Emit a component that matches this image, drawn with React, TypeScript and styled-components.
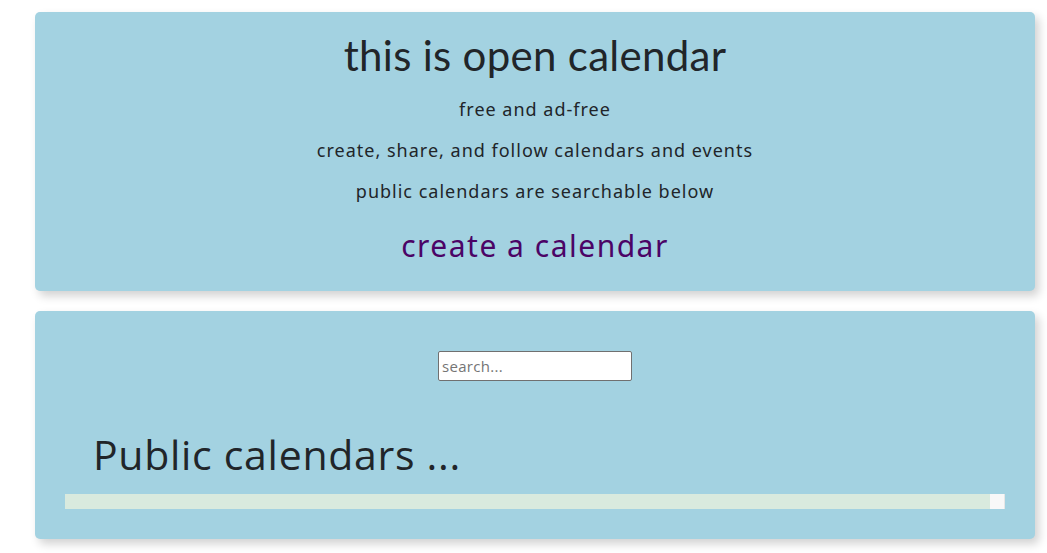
import React from "react";
import styled, { createGlobalStyle } from "styled-components";

const Global = createGlobalStyle`
  html, body { margin: 0; padding: 0; background: #ffffff; }
  body { font-family: "Lato", "Noto Sans", sans-serif; color: #212529; }
`;

const Page = styled.main`
  display: flex;
  flex-direction: column;
  gap: 20px;
  padding: 12px 12px 14px 35px;
  width: 1000px;
`;

const Card = styled.section`
  background: #a3d2e1;
  border-radius: 5px;
  box-shadow: 4px 5px 10px rgba(0, 0, 0, 0.18);
`;

const Intro = styled(Card)`
  height: 279px;
  box-sizing: border-box;
  padding-top: 20px;
  display: flex;
  flex-direction: column;
  align-items: center;
`;

const Title = styled.h1`
  margin: 0;
  font-family: "Lato", sans-serif;
  font-weight: 400;
  font-size: 42px;
  line-height: 46px;
  letter-spacing: 0.3px;
`;

const Line = styled.p`
  margin: 0;
  font-family: "Noto Sans", sans-serif;
  font-size: 18px;
  line-height: 41px;
  letter-spacing: 1px;
`;

const Lines = styled.div`
  display: flex;
  flex-direction: column;
  align-items: center;
  margin-top: 11px;
`;

const CreateLink = styled.a`
  margin-top: 14px;
  font-family: "Noto Sans", sans-serif;
  font-size: 30px;
  line-height: 40px;
  color: #4b0466;
  text-decoration: none;
  letter-spacing: 1.5px;
`;

const Browse = styled(Card)`
  height: 228px;
  box-sizing: border-box;
  padding: 40px 30px 0 30px;
  display: flex;
  flex-direction: column;
`;

const SearchRow = styled.div`
  display: flex;
  justify-content: center;
`;

const Search = styled.input`
  width: 194px;
  height: 30px;
  box-sizing: border-box;
  border: 1px solid #707070;
  border-radius: 2px;
  padding: 0 3px;
  font-family: "Open Sans", sans-serif;
  font-size: 15px;
  letter-spacing: 0.3px;
  color: #333;
  background: #fff;
  outline: none;
  &::placeholder { color: #757575; }
`;

const Heading = styled.h2`
  margin: 49px 0 0 28px;
  font-family: "Open Sans", sans-serif;
  font-weight: 400;
  font-size: 41px;
  line-height: 48px;
  letter-spacing: 0.7px;
`;

const Strip = styled.div`
  margin-top: 16px;
  height: 15px;
  display: flex;
`;

const Track = styled.div`
  flex: 1;
  background: #d9eade;
`;

const Corner = styled.div`
  width: 15px;
  background: #f8f8f8;
  border-right: 1px solid #e6e6e6;
  box-sizing: border-box;
`;

export default function App() {
  return (
    <>
      <Global />
      <Page>
        <Intro>
          <Title>this is open calendar</Title>
          <Lines>
            <Line>free and ad-free</Line>
            <Line>create, share, and follow calendars and events</Line>
            <Line>public calendars are searchable below</Line>
          </Lines>
          <CreateLink href="#">create a calendar</CreateLink>
        </Intro>
        <Browse>
          <SearchRow>
            <Search placeholder="search..." />
          </SearchRow>
          <Heading>Public calendars ...</Heading>
          <Strip>
            <Track />
            <Corner />
          </Strip>
        </Browse>
      </Page>
    </>
  );
}
